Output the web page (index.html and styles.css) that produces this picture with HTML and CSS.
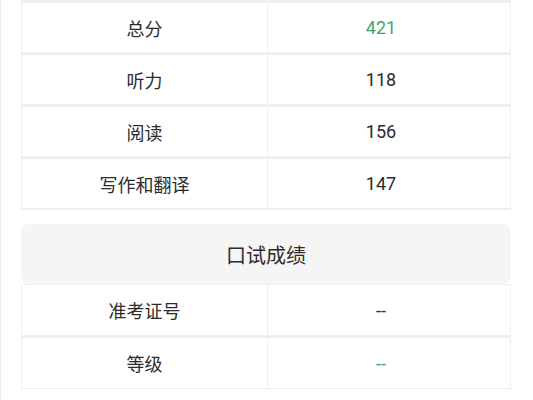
FILE: index.html
```html
<!DOCTYPE html>
<html lang="zh-CN">
<head>
<meta charset="utf-8">
<link rel="stylesheet" href="styles.css">
</head>
<body>
<div class="page">
  <div class="grid first">
    <div class="cell">总分</div><div class="cell val green">421</div>
    <div class="cell">听力</div><div class="cell val">118</div>
    <div class="cell">阅读</div><div class="cell val">156</div>
    <div class="cell">写作和翻译</div><div class="cell val">147</div>
  </div>
  <div class="card">
    <div class="card-head">口试成绩</div>
    <div class="grid second">
      <div class="cell">准考证号</div><div class="cell val">--</div>
      <div class="cell">等级</div><div class="cell val green">--</div>
    </div>
  </div>
</div>
</body>
</html>
```
FILE: styles.css
```css
html, body {
  margin: 0;
  padding: 0;
  background: #ffffff;
}
body {
  font-family: Roboto, "Noto Sans CJK SC", sans-serif;
  color: #2b2b2b;
}
.page {
  width: 533px;
  height: 400px;
  box-sizing: border-box;
  border-left: 1px solid #e9e9e9;
  padding: 0 22px 0 20px;
  display: flex;
  flex-direction: column;
}
.grid {
  display: grid;
  grid-template-columns: 245px 1fr;
  column-gap: 1px;
  row-gap: 3px;
  background: #efefef;
  padding: 1px;
}
.grid.first {
  padding-top: 3px;
  padding-bottom: 2px;
}
.cell {
  background: #ffffff;
  height: 49px;
  display: flex;
  align-items: center;
  justify-content: center;
  font-size: 18px;
}
.second .cell {
  height: 50px;
}
.val {
  padding-right: 16px;
}
.green {
  color: #3fa56b;
}
.card {
  margin-top: 14px;
  display: flex;
  flex-direction: column;
}
.card-head {
  background: #f5f5f5;
  height: 60px;
  border-radius: 8px;
  display: flex;
  align-items: center;
  justify-content: center;
  font-size: 20px;
}
```
